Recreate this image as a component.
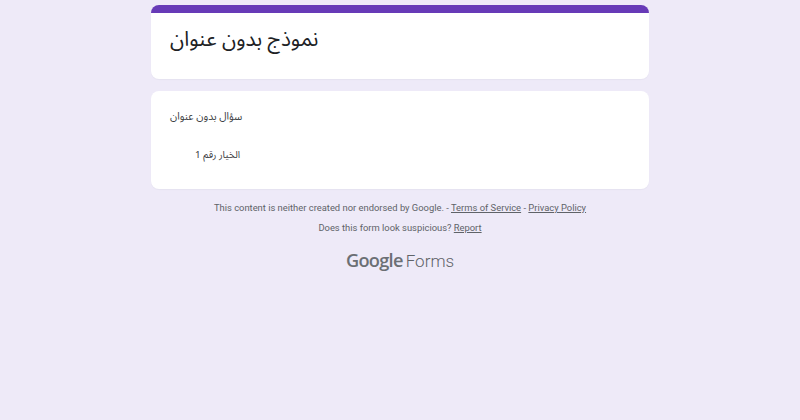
<style>
:global(body) { margin: 0; background: #eeeaf8; }
.page { width: 498px; margin: 0 auto; padding-top: 5px; font-family: Roboto, "Liberation Sans", sans-serif; }
.card { background: #fff; border-radius: 8px; box-shadow: 0 1px 1px rgba(60, 64, 67, .04); }
.head { height: 74px; overflow: hidden; box-sizing: border-box; border-top: 8px solid #673ab7; padding: 8px 18px 0 19px; margin-bottom: 12px; }
h1 { margin: 0; font: 400 20.8px/36px "Noto Sans Arabic", "Liberation Sans", sans-serif; color: #202124; direction: rtl; text-align: left; }
.q { height: 98px; box-sizing: border-box; padding: 17px 18px 0 19px; }
.title { font: 400 10.5px/18px "Noto Sans Arabic", "Liberation Sans", sans-serif; color: #3c4043; direction: rtl; text-align: left; }
.opt { font: 400 9.8px/16px "Noto Sans Arabic", "Liberation Sans", sans-serif; color: #3c4043; direction: rtl; text-align: left; margin: 21px 0 0 25px; }
.foot { text-align: center; color: #5f6368; font-size: 9.4px; line-height: 14px; }
.foot p { margin: 0; }
.l1 { padding-top: 12px; }
.l2 { padding-top: 6px; }
.foot a { color: #5f6368; text-decoration: underline; }
.brand { margin-top: 12px; line-height: 26px; color: #5f6368; display: flex; justify-content: center; align-items: baseline; gap: 3px; }
.g { font: 600 18.2px/26px "Open Sans", Roboto, sans-serif; letter-spacing: -.7px; color: #6b6f74; }
.f { font: 300 17px/26px Roboto, sans-serif; color: #5f6368; }
</style>

<div class="page">
  <div class="card head"><h1>نموذج بدون عنوان</h1></div>
  <div class="card q">
    <div class="title">سؤال بدون عنوان</div>
    <div class="opt">الخيار رقم 1</div>
  </div>
  <div class="foot">
    <p class="l1">This content is neither created nor endorsed by Google. - <a href="#t">Terms of Service</a> - <a href="#p">Privacy Policy</a></p>
    <p class="l2">Does this form look suspicious? <a href="#r">Report</a></p>
  </div>
  <div class="brand"><span class="g">Google</span><span class="f">Forms</span></div>
</div>
